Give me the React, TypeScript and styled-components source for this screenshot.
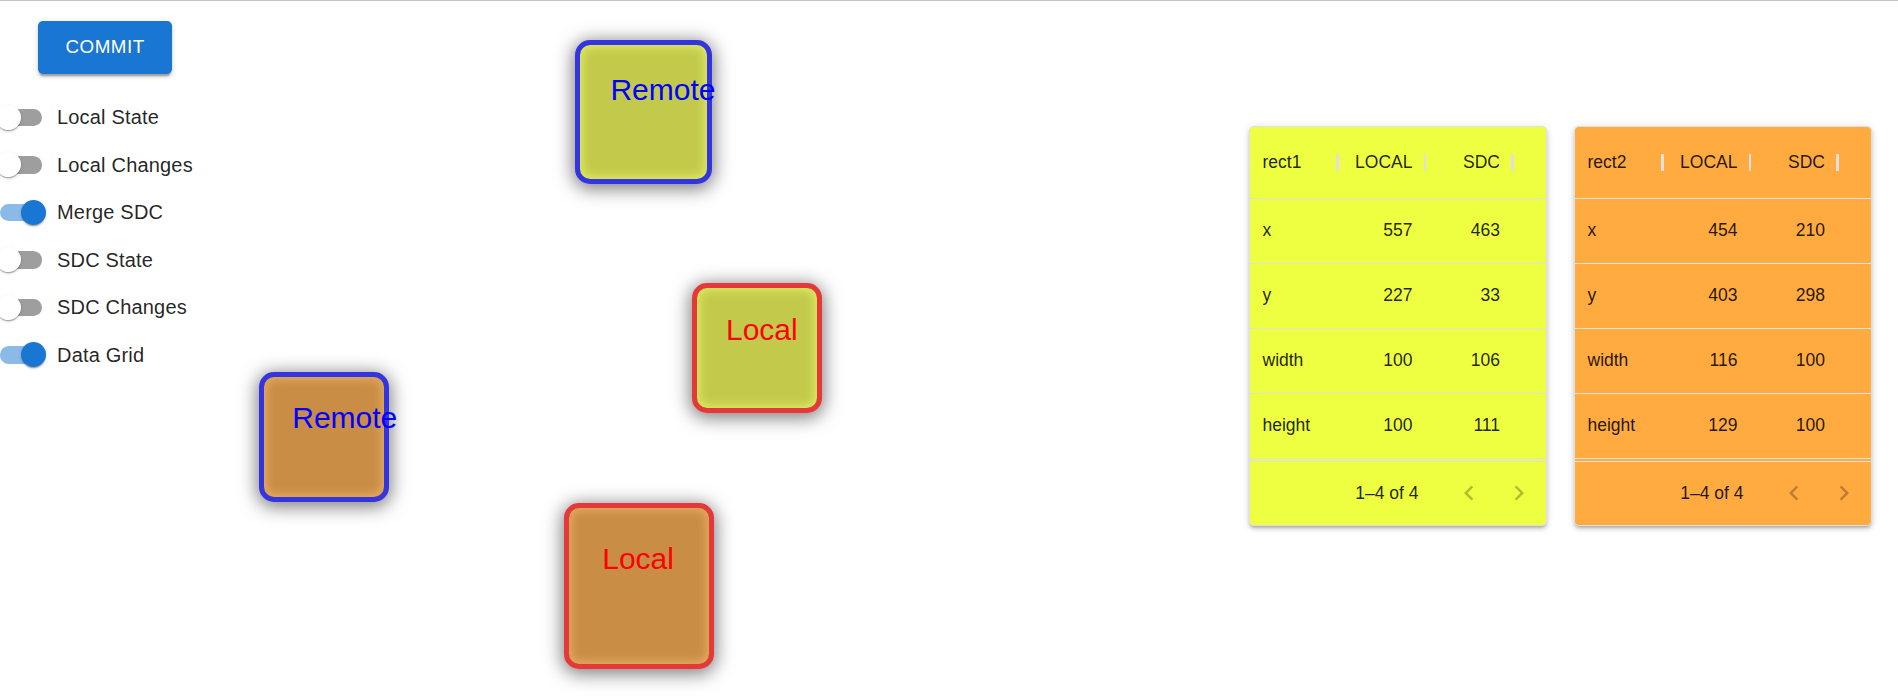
import styled, { createGlobalStyle } from "styled-components";

const SCALE = 1.25;
const ORIGIN_X = -1.5;
const ORIGIN_Y = 0.5;
const STROKE = 5;

// MUI's stack falls back from Roboto to Helvetica/Arial in the original
const UI_FONT = `"Liberation Sans", Helvetica, Arial, sans-serif`;

interface Shape {
  id: string;
  label: "Local" | "Remote";
  fill: "lime" | "orange";
  x: number;
  y: number;
  width: number;
  height: number;
}

const shapes: Shape[] = [
  { id: "r1-sdc", label: "Remote", fill: "lime", x: 463, y: 33, width: 106, height: 111 },
  { id: "r1-local", label: "Local", fill: "lime", x: 557, y: 227, width: 100, height: 100 },
  { id: "r2-sdc", label: "Remote", fill: "orange", x: 210, y: 298, width: 100, height: 100 },
  { id: "r2-local", label: "Local", fill: "orange", x: 454, y: 403, width: 116, height: 129 },
];

const toggles = [
  { label: "Local State", on: false },
  { label: "Local Changes", on: false },
  { label: "Merge SDC", on: true },
  { label: "SDC State", on: false },
  { label: "SDC Changes", on: false },
  { label: "Data Grid", on: true },
];

const grids = [
  {
    name: "rect1",
    bg: "#eeff41",
    rows: [
      ["x", 557, 463],
      ["y", 227, 33],
      ["width", 100, 106],
      ["height", 100, 111],
    ],
  },
  {
    name: "rect2",
    bg: "#ffab40",
    rows: [
      ["x", 454, 210],
      ["y", 403, 298],
      ["width", 116, 100],
      ["height", 129, 100],
    ],
  },
];

const GlobalStyle = createGlobalStyle`
  html, body {
    margin: 0;
    padding: 0;
    background: #fff;
    overflow: hidden;
  }
  body {
    font-family: ${UI_FONT};
  }
`;

const Page = styled.div`
  width: 1898px;
  height: 698px;
  overflow: hidden;
`;

const TopRule = styled.div`
  height: 1px;
  background: #c6c6c6;
`;

const Workspace = styled.div`
  position: relative;
  height: 697px;
  display: flex;
  justify-content: space-between;
  align-items: flex-start;
`;

const Stage = styled.div`
  position: absolute;
  inset: 0;
  pointer-events: none;
`;

const fills = {
  lime: { base: "#c3ca4b", glow: "rgba(226, 238, 104, 0.85)" },
  orange: { base: "#c98d46", glow: "rgba(232, 176, 100, 0.85)" },
};

const ShapeBox = styled.div<{ $fill: "lime" | "orange"; $remote: boolean }>`
  position: absolute;
  box-sizing: border-box;
  border: ${STROKE}px solid ${({ $remote }) => ($remote ? "#3535df" : "#e53838")};
  border-radius: 15px;
  background: ${({ $fill }) => fills[$fill].base};
  box-shadow: inset 0 0 10px 3px ${({ $fill }) => fills[$fill].glow},
    0 3px 18px 2px rgba(0, 0, 0, 0.5);
`;

const ShapeLabel = styled.span<{ $remote: boolean }>`
  position: absolute;
  font-family: "Liberation Sans", Arial, sans-serif;
  font-size: 30px;
  line-height: 1;
  white-space: nowrap;
  color: ${({ $remote }) => ($remote ? "#0000ff" : "#ff0000")};
`;

const ControlPanel = styled.div`
  position: relative;
  display: flex;
  flex-direction: column;
  align-items: flex-start;
  padding-top: 20px;
`;

const CommitButton = styled.button`
  margin-left: 38px;
  padding: 10px 27.5px;
  border: 0;
  border-radius: 5px;
  background: #1976d2;
  color: #fff;
  font-family: ${UI_FONT};
  font-weight: 400;
  font-size: 18.75px;
  line-height: 1.75;
  letter-spacing: 0.02857em;
  text-transform: uppercase;
  box-shadow: 0 3.75px 1.25px -2.5px rgba(0, 0, 0, 0.2),
    0 2.5px 2.5px 0 rgba(0, 0, 0, 0.14), 0 1.25px 6.25px 0 rgba(0, 0, 0, 0.12);
  cursor: pointer;
`;

const ToggleList = styled.div`
  display: flex;
  flex-direction: column;
  margin-top: 19.75px;
`;

const ToggleRow = styled.label`
  display: flex;
  align-items: center;
  height: 47.5px;
`;

const SwitchRoot = styled.span`
  position: relative;
  flex: none;
  box-sizing: border-box;
  width: 72.5px;
  height: 47.5px;
  padding: 15px;
  margin-left: -15.5px;
`;

const Track = styled.span<{ $on: boolean }>`
  display: block;
  width: 42.5px;
  height: 17.5px;
  border-radius: 8.75px;
  background: ${({ $on }) => ($on ? "rgba(25, 118, 210, 0.5)" : "rgba(0, 0, 0, 0.38)")};
`;

const Thumb = styled.span<{ $on: boolean }>`
  position: absolute;
  top: 11.25px;
  left: ${({ $on }) => ($on ? 36.25 : 11.25)}px;
  width: 25px;
  height: 25px;
  border-radius: 50%;
  background: ${({ $on }) => ($on ? "#1976d2" : "#fff")};
  box-shadow: 0 2.5px 1.25px -1.25px rgba(0, 0, 0, 0.2),
    0 1.25px 1.25px 0 rgba(0, 0, 0, 0.14), 0 1.25px 3.75px 0 rgba(0, 0, 0, 0.12);
`;

const ToggleText = styled.span`
  font-family: ${UI_FONT};
  font-size: 20px;
  line-height: 1.5;
  letter-spacing: 0.00938em;
  color: rgba(0, 0, 0, 0.87);
`;

const GridRow = styled.div`
  position: relative;
  display: flex;
  gap: 27px;
  margin-top: 125px;
  margin-right: 26px;
`;

const GridCard = styled.div<{ $bg: string }>`
  box-sizing: border-box;
  width: 298px;
  height: 400px;
  display: flex;
  flex-direction: column;
  border: 1px solid rgba(224, 224, 224, 1);
  border-radius: 5px;
  overflow: hidden;
  background: ${({ $bg }) => $bg};
  box-shadow: 0 3px 3px -2px rgba(0, 0, 0, 0.2), 0 3px 4px 0 rgba(0, 0, 0, 0.14),
    0 1px 8px 0 rgba(0, 0, 0, 0.12);
  font-family: ${UI_FONT};
  font-size: 17.5px;
  color: rgba(0, 0, 0, 0.87);
`;

const HeadRow = styled.div`
  box-sizing: border-box;
  display: flex;
  height: 71.5px;
  flex: none;
  border-bottom: 1px solid rgba(224, 224, 224, 1);
`;

const BodyRow = styled.div`
  box-sizing: border-box;
  display: flex;
  height: 65px;
  flex: none;
  border-bottom: 1px solid rgba(224, 224, 224, 1);
`;

const Cell = styled.div<{ $numeric?: boolean }>`
  position: relative;
  box-sizing: border-box;
  flex: none;
  width: 87.5px;
  padding: 0 12.5px;
  display: flex;
  align-items: center;
  justify-content: ${({ $numeric }) => ($numeric ? "flex-end" : "flex-start")};
  white-space: nowrap;
`;

const Separator = styled.span`
  position: absolute;
  right: -1.25px;
  top: 50%;
  width: 2.5px;
  height: 17.5px;
  margin-top: -8.75px;
  background: rgba(224, 224, 224, 1);
`;

const Footer = styled.div`
  box-sizing: border-box;
  flex: 1;
  margin-top: 2px;
  border-top: 1px solid rgba(224, 224, 224, 1);
  display: flex;
  align-items: center;
  justify-content: flex-end;
  padding-right: 2.5px;
`;

const PageInfo = styled.span`
  font-size: 17.5px;
  line-height: 1.43;
`;

const PagerActions = styled.div`
  display: flex;
  margin-left: 25px;
`;

const PagerButton = styled.button`
  width: 50px;
  height: 50px;
  padding: 0;
  border: 0;
  background: transparent;
  display: flex;
  align-items: center;
  justify-content: center;
  color: rgba(0, 0, 0, 0.26);
`;

function Chevron({ dir }: { dir: "left" | "right" }) {
  return (
    <svg width="30" height="30" viewBox="0 0 24 24" fill="currentColor">
      {dir === "left" ? (
        <path d="M15.41 16.59 10.83 12l4.58-4.59L14 6l-6 6 6 6 1.41-1.41z" />
      ) : (
        <path d="M8.59 16.59 13.17 12 8.59 7.41 10 6l6 6-6 6-1.41-1.41z" />
      )}
    </svg>
  );
}

function CanvasShape({ shape }: { shape: Shape }) {
  const w = shape.width * SCALE;
  const h = shape.height * SCALE;
  const remote = shape.label === "Remote";
  return (
    <ShapeBox
      $fill={shape.fill}
      $remote={remote}
      style={{
        left: ORIGIN_X + shape.x * SCALE - STROKE / 2,
        top: ORIGIN_Y + shape.y * SCALE - STROKE / 2,
        width: w + STROKE,
        height: h + STROKE,
      }}
    >
      <ShapeLabel $remote={remote} style={{ left: w / 4 - STROKE / 2, top: h / 4 - STROKE / 2 - 2 }}>
        {shape.label}
      </ShapeLabel>
    </ShapeBox>
  );
}

function DataGrid({ name, bg, rows }: (typeof grids)[number]) {
  return (
    <GridCard $bg={bg}>
      <HeadRow>
        <Cell>
          {name}
          <Separator />
        </Cell>
        <Cell $numeric>
          LOCAL
          <Separator />
        </Cell>
        <Cell $numeric>
          SDC
          <Separator />
        </Cell>
      </HeadRow>
      {rows.map(([key, local, sdc]) => (
        <BodyRow key={key}>
          <Cell>{key}</Cell>
          <Cell $numeric>{local}</Cell>
          <Cell $numeric>{sdc}</Cell>
        </BodyRow>
      ))}
      <Footer>
        <PageInfo>1–4 of 4</PageInfo>
        <PagerActions>
          <PagerButton disabled>
            <Chevron dir="left" />
          </PagerButton>
          <PagerButton disabled>
            <Chevron dir="right" />
          </PagerButton>
        </PagerActions>
      </Footer>
    </GridCard>
  );
}

export default function App() {
  return (
    <Page>
      <GlobalStyle />
      <TopRule />
      <Workspace>
        <Stage>
          {shapes.map((s) => (
            <CanvasShape key={s.id} shape={s} />
          ))}
        </Stage>
        <ControlPanel>
          <CommitButton>Commit</CommitButton>
          <ToggleList>
            {toggles.map((t) => (
              <ToggleRow key={t.label}>
                <SwitchRoot>
                  <Track $on={t.on} />
                  <Thumb $on={t.on} />
                </SwitchRoot>
                <ToggleText>{t.label}</ToggleText>
              </ToggleRow>
            ))}
          </ToggleList>
        </ControlPanel>
        <GridRow>
          {grids.map((g) => (
            <DataGrid key={g.name} {...g} />
          ))}
        </GridRow>
      </Workspace>
    </Page>
  );
}
